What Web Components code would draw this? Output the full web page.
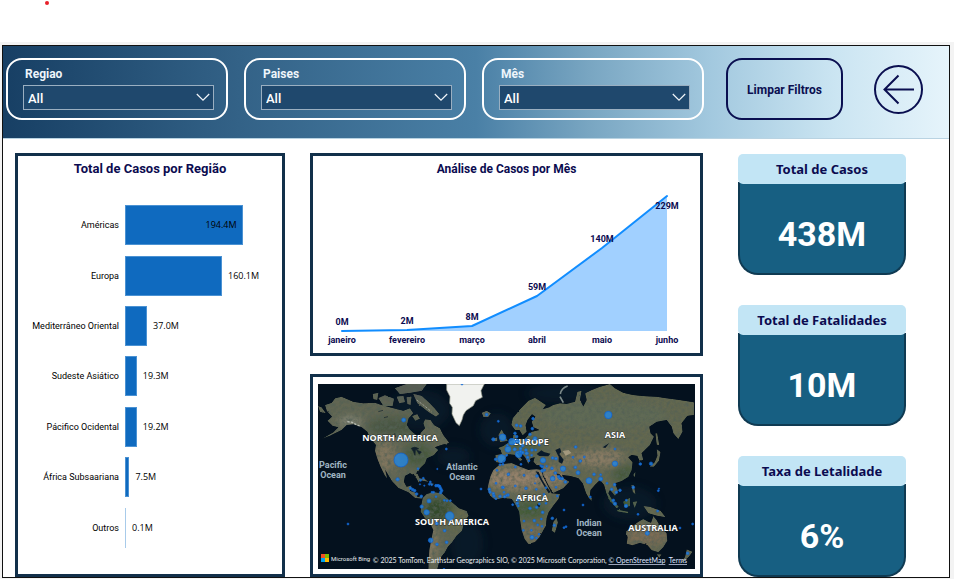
<!DOCTYPE html>
<html lang="pt">
<head>
<meta charset="utf-8">
<title>Painel de Casos</title>
<style>
  html { background: #fff; }
  body { margin: 0; font-family: Roboto, "Liberation Sans", sans-serif; color: #0b0b50; }
</style>
</head>
<body>
<report-board>
  <filter-box slot="filters" label="Regiao"></filter-box>
  <filter-box slot="filters" label="Paises"></filter-box>
  <filter-box slot="filters" label="Mês"></filter-box>
  <reset-button slot="actions">Limpar Filtros</reset-button>
  <back-button slot="actions"></back-button>
  <chart-panel slot="left" heading="Total de Casos por Região"><region-bars></region-bars></chart-panel>
  <chart-panel slot="middle" heading="Análise de Casos por Mês" compact><trend-chart></trend-chart></chart-panel>
  <chart-panel slot="middle"><world-map></world-map></chart-panel>
  <kpi-card slot="right" heading="Total de Casos">438M</kpi-card>
  <kpi-card slot="right" heading="Total de Fatalidades">10M</kpi-card>
  <kpi-card slot="right" heading="Taxa de Letalidade">6%</kpi-card>
</report-board>

<script>
const define = (name, render) => customElements.define(name, class extends HTMLElement {
  connectedCallback() {
    if (!this.shadowRoot) this.attachShadow({ mode: 'open' }).innerHTML = render(this);
  }
});

define('report-board', () => `
<style>
  :host { display: block; }
  .top { height: 42px; padding: 1px 0 0 45px; box-sizing: border-box; }
  .dot { width: 4px; height: 4px; border-radius: 50%; background: #e8202a; }
  .canvas { background: #f3f3f3; padding: 3px 4px 1px 2px; }
  .page { border: 1px solid #111; background: #fff; }
  header { display: flex; align-items: center; padding: 12px 26px 18px 3px; border-bottom: 1px solid #b9d3e2;
    background: linear-gradient(90deg, #173f64, #336287 25%, #4a80a6 50%, #79a6c2 62%, #a3c9df 75%, #cbe5f2 88%, #e6f4fb); }
  .filters { display: flex; gap: 16px; flex: 1; }
  .actions { display: flex; align-items: center; gap: 31px; margin-left: 22px; }
  main { display: grid; grid-template-columns: 270fr 25px 393fr 35px 168fr; padding: 14px 43px 0 12px; }
  .left { grid-column: 1; display: grid; }
  .middle { grid-column: 3; display: flex; flex-direction: column; gap: 18px; }
  .right { grid-column: 5; display: flex; flex-direction: column; gap: 30px; padding-top: 1px; }
</style>
<div class="top"><div class="dot"></div></div>
<div class="canvas"><div class="page">
  <header>
    <div class="filters"><slot name="filters"></slot></div>
    <div class="actions"><slot name="actions"></slot></div>
  </header>
  <main>
    <div class="left"><slot name="left"></slot></div>
    <div class="middle"><slot name="middle"></slot></div>
    <div class="right"><slot name="right"></slot></div>
  </main>
</div></div>`);

define('filter-box', el => `
<style>
  :host { display: block; flex: 1; box-sizing: border-box; height: 62px; border: 2px solid #fff; border-radius: 16px; padding: 7px 12px 0 15px; }
  label { display: block; padding-left: 2px; font: 700 12px/14px Roboto, sans-serif; color: #eef5fb; }
  .field { display: grid; margin-top: 4px; align-items: center; }
  select { grid-area: 1/1; appearance: none; width: 100%; height: 25px; border: 1px solid #9aafc1; border-radius: 0;
    background: #1f486d; color: #fff; padding: 2px 4px 0; font: 500 13px/20px Roboto, sans-serif; }
  svg { grid-area: 1/1; justify-self: end; margin-right: 4px; pointer-events: none; }
</style>
<label for="s">${el.getAttribute('label')}</label>
<div class="field">
  <select id="s"><option>All</option></select>
  <svg width="14" height="9" viewBox="0 0 14 9" fill="none" stroke="#f2f6fa" stroke-width="1.2"><path d="M.8 1 7 7.2 13.200 1"/></svg>
</div>`);

define('reset-button', () => `
<style>
  :host { display: block; }
  button { width: 117px; height: 62px; border: 2px solid #0a0f50; border-radius: 16px; background: none; padding: 2px 0 0; white-space: nowrap;
    color: #0a0f50; font: 700 12px/14px Roboto, sans-serif; }
</style>
<button type="button"><slot></slot></button>`);

define('back-button', () => `
<style>
  :host { display: block; }
  button { display: block; width: 49px; height: 49px; padding: 0; border: 0; background: none; }
  svg { display: block; }
</style>
<button type="button" aria-label="Voltar">
  <svg width="49" height="49" viewBox="0 0 49 49" fill="none" stroke="#0a0f50" stroke-width="2"><circle cx="24.500" cy="24.500" r="23.500"/><path d="M40 24.500H10.500M24.500 10.500l-14 14 14 14"/></svg>
</button>`);

define('chart-panel', el => `
<style>
  :host { display: block; box-sizing: border-box; border: 3px solid #12304a; background: #fff; min-height: 203px; }
  h2 { margin: 0; padding-top: 5px; text-align: center; font: 700 13px/16px Roboto, sans-serif; color: #0b0b50; }
  :host([compact]) h2 { font-size: 12px; }
</style>
${el.hasAttribute('heading') ? `<h2>${el.getAttribute('heading')}</h2>` : ''}<slot></slot>`);

const regions = [['Américas', 194.4], ['Europa', 160.1], ['Mediterrâneo Oriental', 37], ['Sudeste Asiático', 19.3],
  ['Pácifico Ocidental', 19.2], ['África Subsaariana', 7.5], ['Outros', 0.1]];

define('region-bars', () => `
<style>
  :host { display: grid; grid-auto-rows: 1fr; height: 353px; padding: 23px 10px 0 0; font: 400 9px/12px "Open Sans", sans-serif; color: #000; }
  .row { display: grid; grid-template-columns: 101px 1fr; gap: 6px; align-items: center; }
  .name { text-align: right; white-space: nowrap; font-family: Roboto, sans-serif; }
  .plot { display: flex; align-items: center; gap: 6px; }
  .bar { flex: none; height: 40px; min-width: 1px; box-sizing: border-box; background: #0f6abf; border: 1px solid #4b92d3; display: flex; align-items: center; justify-content: flex-end; }
  .inside { padding-right: 5px; }
  .thin { border-width: 0; background: #a8cbea; }
</style>
${regions.map(([name, v], i) => {
  const value = `<span>${v.toFixed(1)}M</span>`;
  return `<div class="row"><span class="name">${name}</span><div class="plot"><div class="bar ${i ? '' : 'inside'} ${v < 1 ? 'thin' : ''}" style="width:${Math.round(v / 2.43)}%">${i ? '' : value}</div>${i ? value : ''}</div></div>`;
}).join('')}`);

const months = [['janeiro', '0M', 29, 154], ['fevereiro', '2M', 94, 153], ['março', '8M', 159, 149],
  ['abril', '59M', 224, 119], ['maio', '140M', 289, 71], ['junho', '229M', 354, 19]];

define('trend-chart', () => {
  const line = months.map(m => `${m[2]} ${m[3]}`).join(' ');
  return `
<style>
  :host { display: block; }
  svg { display: block; width: 100%; }
  text { font: 700 9px Roboto, sans-serif; fill: #0b0b50; text-anchor: middle; }
</style>
<svg viewBox="0 0 387 176">
  <polygon points="29 154 ${line} 354 154" fill="#a1d0ff"/>
  <polyline points="${line}" fill="none" stroke="#118dff" stroke-width="2" stroke-linejoin="round" stroke-linecap="round"/>
  ${months.map((m, i) => `<text x="${m[2]}" y="${i === 5 ? m[3] + 13 : m[3] - 6}">${m[1]}</text><text x="${m[2]}" y="166">${m[0]}</text>`).join('')}
</svg>`;
});

/* Coastlines; the two halves of the map each have their own origin, three units to a pixel. */
const west = 'M50 122 45 105 65 98 75 85 95 80 130 95 160 100 195 98 215 105 240 112 262 118 280 122 300 115 310 130 296 145 290 165 300 180 318 195 328 205 332 188 345 175 340 160 345 148 362 150 372 165 390 175 400 195 418 218 395 225 375 232 385 240 372 255 350 265 345 280 330 295 322 310 332 330 326 338 316 318 300 310 285 318 282 335 290 350 305 346 300 362 318 368 322 380 338 380 335 386 315 384 295 367 265 354 245 332 225 298 232 326 224 316 212 290 203 268 195 242 198 225 180 205 172 185 155 172 130 163 110 165 95 180 60 197 35 207 70 187 85 172 68 168 52 152 66 140ZM24 108 35 112 48 130 30 126ZM310 72 335 78 358 98 374 115 388 132 378 140 356 127 340 114 322 100ZM205 84 225 76 252 86 248 108 220 108ZM255 55 290 42 350 42 335 62 300 68 270 72ZM188 72 205 68 202 90 190 88ZM260 80 280 78 285 96 268 100ZM290 82 304 80 302 105 292 102ZM306 138 322 132 330 146 316 152ZM515 128 530 122 543 130 535 141 520 141ZM312 322 345 327 356 336 330 331ZM357 338 374 341 364 347ZM395 208 416 216 410 224 396 220ZM338 384 350 372 370 366 395 370 415 388 432 402 447 415 470 423 476 437 462 457 456 482 440 497 427 516 414 530 405 547 393 562 387 578 382 598 355 598 356 570 358 540 364 510 370 480 360 460 345 445 332 425 334 405Z';
const east = 'M-20 300 0 283 35 279 60 290 85 300 110 298 125 300 128 318 142 345 155 370 180 372 176 387 160 407 146 427 140 445 138 467 126 487 118 502 105 516 85 522 74 507 65 480 60 450 58 425 45 402 35 387 10 384 -15 389 -30 377 -38 357 -34 340 -28 318ZM160 455 170 443 174 458 165 489 155 482ZM-12 277 -14 255 5 252 2 240 -6 234 10 228 25 218 38 210 40 195 48 195 50 208 75 206 85 195 95 185 118 180 100 172 95 155 106 140 96 133 83 150 77 165 80 185 68 196 58 180 45 180 34 165 38 145 60 118 85 92 105 83 120 93 138 105 128 118 148 112 160 105 180 100 200 102 225 95 232 65 245 62 240 90 250 110 260 90 255 70 275 60 300 50 330 42 345 55 370 68 400 75 430 78 470 80 500 85 540 90 582 97 582 135 562 138 545 160 548 185 535 208 520 190 515 170 500 150 470 155 448 170 452 190 462 200 450 225 435 240 425 250 430 270 418 272 412 258 395 255 385 262 398 277 395 300 385 320 365 333 345 340 354 362 345 377 330 360 325 370 340 397 332 397 319 370 312 345 300 330 285 345 272 360 268 387 258 370 248 340 235 325 210 318 186 314 190 325 208 335 190 355 160 369 148 350 130 315 128 300 130 285 110 286 100 275 104 262 92 265 85 282 75 262 60 245 50 250 68 270 60 273 45 255 25 252 15 266 5 280ZM-5 195 5 178 14 195 23 212 0 217ZM-18 205-8 202-8 214-18 214ZM448 290 464 277 472 257 470 237 482 246 477 272 462 290ZM466 190 472 190 478 226 470 224ZM324 384 332 386 356 410 350 415ZM370 395 390 383 390 408 374 412ZM352 419 385 425 384 430 352 424ZM394 345 402 346 407 374 398 365ZM398 396 412 394 404 414ZM430 408 450 410 482 422 497 442 470 437 445 430ZM378 485 395 470 415 455 430 447 445 455 453 458 460 438 470 450 482 472 500 490 502 512 490 532 475 547 455 541 442 525 420 518 397 526 380 521 383 502ZM470 553 485 553 478 564ZM560 538 578 545 567 560 548 576 536 584 555 561ZM268 384 276 384 274 394ZM400 315 406 306 405 322Z';

/* x, y and radius of each bubble. */
const westDots = [[273,270,21],[281,150,6],[263,328,5],[324,296,3],[382,297,2],[409,237,3],[340,325,3],[332,331,3],[330,343,2],[343,347,2],[361,336,3],[365,344,3],[358,343,3],[302,355,4],[308,359,4],[314,362,4],[320,372,4],[334,379,4],[378,347,4],[384,347,4],[389,350,4],[392,356,4],[395,362,4],[392,368,4],[388,348,3],[366,367,3],[371,367,3],[378,380,3],[357,393,6],[335,410,5],[403,391,3],[411,392,3],[421,392,3],[350,427,8],[419,438,13],[381,461,4],[404,482,4],[410,517,4],[362,511,7],[381,523,4],[402,598,3],[114,462,3],[513,357,3],[530,134,4],[565,154,3],[456,42,3]];
const eastDots = [[-20,208,5],[8,202,10],[-13,268,4],[5,266,12],[24,238,9],[36,215,10],[56,253,10],[52,214,6],[20,256,3],[44,238,5],[62,236,4],[68,227,4],[62,245,4],[68,248,4],[78,240,4],[80,250,5],[83,262,4],[87,272,3],[96,240,4],[95,256,3],[78,210,4],[90,193,4],[97,176,4],[99,146,4],[50,166,4],[62,168,4],[45,190,4],[105,206,6],[107,240,3],[118,225,3],[50,200,4],[22,226,3],[325,135,11],[129,271,8],[189,296,8],[158,326,7],[234,308,6],[267,332,9],[345,281,8],[302,327,6],[345,237,3],[227,231,4],[253,261,3],[241,273,4],[219,262,3],[226,292,4],[158,264,4],[168,266,4],[122,287,3],[127,290,4],[127,302,5],[134,300,3],[140,289,3],[156,295,4],[166,309,4],[176,320,4],[180,325,4],[187,326,4],[196,336,4],[168,352,3],[282,313,4],[302,314,3],[321,340,3],[344,344,4],[335,358,4],[349,367,4],[360,361,4],[400,352,4],[421,282,4],[453,281,5],[475,362,3],[477,356,2],[271,381,3],[249,405,3],[340,391,4],[345,401,5],[378,408,5],[379,391,3],[414,433,3],[473,423,3],[442,490,6],[540,474,3],[578,462,3],[563,550,4],[25,313,4],[72,316,3],[46,291,3],[63,283,3],[111,318,4],[-9,301,3],[-12,340,3],[8,352,4],[12,367,3],[24,375,4],[46,348,3],[78,355,4],[109,358,3],[105,340,2],[138,353,3],[132,373,3],[172,378,3],[38,404,3],[52,400,4],[55,408,3],[54,390,3],[90,415,4],[110,412,4],[118,402,3],[138,400,3],[128,427,4],[124,447,3],[103,452,4],[113,465,3],[126,469,3],[72,453,3],[70,481,3],[94,481,3],[96,502,6],[109,504,3],[117,493,3],[157,445,4],[163,466,4],[192,420,3],[192,473,3],[198,470,3],[-32,358,4],[-30,366,4],[-20,371,4],[-18,378,4],[-12,386,3],[0,379,4],[14,380,4],[20,376,3],[10,353,3],[9,283,3],[0,284,3]];
const dots = list => list.map(([x, y, r]) => `<circle cx="${x}" cy="${y}" r="${r}"/>`).join('');

define('world-map', () => `
<style>
  :host { display: block; padding: 7px 5px 5px 5px; }
  svg { display: block; width: 100%; background: #04111e; }
  .bubbles { fill: #2586df; fill-opacity: .82; stroke: #0b5fd6; stroke-width: 2; }
  .land text, .sea text { text-anchor: middle; paint-order: stroke; stroke: #10181c; stroke-width: 1; stroke-opacity: .7; }
  .land text { font: 700 9px "Open Sans", sans-serif; fill: #fff; }
  .sea text { font: 700 9px Roboto, sans-serif; fill: #9fb5c6; }
  .credit { font: 400 7px Lato, sans-serif; fill: #e9edf0; text-anchor: end; }
  .brand { font: 400 6px Roboto, sans-serif; fill: #e9edf0; }
  a { text-decoration: underline; fill: #dfe6ff; }
</style>
<svg viewBox="0 0 377 185">
  <defs>
    <filter id="rough" x="-5%" y="-5%" width="110%" height="110%">
      <feTurbulence type="fractalNoise" baseFrequency=".06" numOctaves="3" seed="4" result="n"/>
      <feDisplacementMap in="SourceGraphic" in2="n" scale="5" xChannelSelector="R" yChannelSelector="G" result="d"/>
      <feTurbulence type="fractalNoise" baseFrequency=".09" numOctaves="4" seed="9"/>
      <feColorMatrix values="0 0 0 0 .09  0 0 0 0 .12  0 0 0 0 .09  1.4 1.1 0 0 -1"/>
      <feComposite in2="d" operator="in" result="m"/>
      <feMerge><feMergeNode in="d"/><feMergeNode in="m"/></feMerge>
    </filter>
    <filter id="soft" x="-50%" y="-50%" width="200%" height="200%"><feGaussianBlur stdDeviation="12"/></filter>
    <clipPath id="cw"><path d="${west}"/></clipPath>
    <clipPath id="ce"><path d="${east}"/></clipPath>
  </defs>
  <g filter="url(#soft)" transform="translate(-8 -14) scale(.3333)" fill="#0a2030" opacity=".5">
    <ellipse cx="430" cy="260" rx="50" ry="30"/><ellipse cx="330" cy="120" rx="90" ry="60"/><ellipse cx="470" cy="520" rx="50" ry="70"/><ellipse cx="960" cy="400" rx="80" ry="50"/><ellipse cx="560" cy="180" rx="50" ry="50"/><ellipse cx="770" cy="70" rx="120" ry="30"/>
  </g>
  <g transform="translate(-8 -14) scale(.3333)">
    <g filter="url(#rough)"><g clip-path="url(#cw)">
      <path d="${west}" fill="#626653"/>
      <g filter="url(#soft)">
        <ellipse cx="250" cy="170" rx="80" ry="28" fill="#4a5642"/><ellipse cx="225" cy="260" rx="34" ry="50" fill="#80745d"/><ellipse cx="325" cy="255" rx="44" ry="35" fill="#47583c"/><ellipse cx="285" cy="60" rx="90" ry="40" fill="#565c52"/>
        <ellipse cx="385" cy="420" rx="48" ry="35" fill="#33492c"/><ellipse cx="440" cy="450" rx="30" ry="34" fill="#686a49"/><ellipse cx="365" cy="520" rx="10" ry="60" fill="#9a8467"/><ellipse cx="120" cy="155" rx="35" ry="10" fill="#96978a"/>
      </g>
    </g></g>
    <path d="M410 42H523L513 62 517 82 497 92 490 107 468 122 460 135 456 150 448 167 438 158 426 132 427 112 419 100 420 80 410 60Z" fill="#f1f2ef" stroke="#8c9180" stroke-width="2"/>
    <path d="M112 155l15 2 12 7 10 4" fill="none" stroke="#b9bdb3" stroke-width="4" stroke-dasharray="7 4"/>
    <path d="M320 90l24 18 20 17" fill="none" stroke="#9a9f97" stroke-width="3" stroke-dasharray="7 4"/>
    <path d="M304 235q10-7 22 1l-10 4-1 16-5-12ZM320 240l14 6-6 7ZM222 143l12-3M205 125l14-4M254 190l3 12" fill="#10202b" stroke="#10202b" stroke-width="2"/>
  </g>
  <g transform="translate(182 -14) scale(.3333)">
    <g filter="url(#rough)"><g clip-path="url(#ce)">
      <path d="${east}" fill="#636750"/>
      <g filter="url(#soft)">
        <ellipse cx="50" cy="325" rx="100" ry="34" fill="#94816a"/><ellipse cx="160" cy="325" rx="35" ry="30" fill="#907e64"/><ellipse cx="90" cy="420" rx="50" ry="28" fill="#435a37"/><ellipse cx="95" cy="490" rx="40" ry="28" fill="#766d54"/>
        <ellipse cx="300" cy="265" rx="75" ry="26" fill="#8a7b65"/><ellipse cx="205" cy="265" rx="40" ry="22" fill="#7e755b"/><ellipse cx="70" cy="225" rx="60" ry="25" fill="#4c5f40"/><ellipse cx="370" cy="310" rx="36" ry="28" fill="#45593b"/>
        <ellipse cx="310" cy="135" rx="190" ry="38" fill="#616a54"/><ellipse cx="350" cy="400" rx="60" ry="25" fill="#3a5936"/><ellipse cx="440" cy="498" rx="65" ry="28" fill="#7e6d55"/>
      </g>
    </g></g>
    <path d="M110 252 124 241 132 246 151 251 145 259 118 258ZM166 240 180 234 184 246 178 252 191 269 186 281 176 276 176 260ZM167 310 178 312 189 325 181 326ZM107 304l9 2 10 22 12 20 14 18-6 4-16-26-14-24ZM112 402h8v8h-8ZM308 232l20-13-12 15ZM226 242l10-2" fill="#08192a"/>
    <path d="M181 72q3-18 22-24M180 80l10 18" fill="none" stroke="#7c8a89" stroke-width="5"/>
    <path d="M188 243l18-3 8 9-17 8Z" fill="#b9ab8f" opacity=".7"/>
  </g>
  <g class="land">
    <text x="82" y="57">NORTH AMERICA</text><text x="134" y="141">SOUTH AMERICA</text><text x="213" y="61">EUROPE</text>
    <text x="214" y="117">AFRICA</text><text x="297" y="54">ASIA</text><text x="335" y="147">AUSTRALIA</text>
  </g>
  <g class="sea">
    <text x="15" y="84">Pacific</text><text x="15" y="94">Ocean</text><text x="144" y="86">Atlantic</text><text x="144" y="96">Ocean</text>
    <text x="271" y="142">Indian</text><text x="271" y="152">Ocean</text>
  </g>
  <g class="bubbles" transform="translate(-8 -14) scale(.3333)">${dots(westDots)}</g>
  <g class="bubbles" transform="translate(182 -14) scale(.3333)">${dots(eastDots)}</g>
  <path d="M3 170h4v4H3Z" fill="#f25022"/><path d="M7 170h4v4H7Z" fill="#7fba00"/><path d="M3 174h4v4H3Z" fill="#00a4ef"/><path d="M7 174h4v4H7Z" fill="#ffb900"/>
  <text class="brand" x="13" y="177">Microsoft Bing</text>
  <text class="credit" x="369" y="179">© 2025 TomTom, Earthstar Geographics SIO, © 2025 Microsoft Corporation, <a href="#osm">© OpenStreetMap</a>&nbsp; <a href="#terms">Terms</a></text>
</svg>`);

define('kpi-card', el => `
<style>
  :host { display: block; box-sizing: border-box; height: 121px; }
  h2 { position: relative; margin: 0; height: 30px; border-radius: 5px; background: #c2e5f5; text-align: center; font: 700 13px/30px "Noto Sans", sans-serif; color: #0b0b50; white-space: nowrap; }
  .value { box-sizing: border-box; height: 93px; margin-top: -2px; padding-top: 12px; border: 2px solid #0f3a52; border-top: 0; border-radius: 0 0 20px 20px; background: #175f82;
    display: flex; align-items: center; justify-content: center; color: #fff; font: 700 34px/40px Roboto, sans-serif; }
</style>
<h2>${el.getAttribute('heading')}</h2>
<div class="value"><slot></slot></div>`);
</script>
</body>
</html>
